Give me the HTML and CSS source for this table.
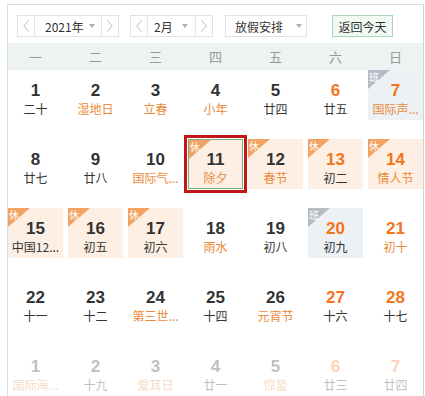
FILE: index.html
```html
<!DOCTYPE html>
<html lang="zh-CN">
<head>
<meta charset="utf-8">
<title>万年历</title>
<link rel="stylesheet" href="styles.css">
</head>
<body>
<div class="cal">
  <div class="toolbar">
    <div class="picker year">
      <span class="arrow prev"><svg width="6" height="12" viewBox="0 0 6 12"><path d="M5.5 0.5 L0.7 6 L5.5 11.5" fill="none" stroke="#b8b8b8"/></svg></span>
      <span class="value">2021年<i class="caret"></i></span>
      <span class="arrow next"><svg width="6" height="12" viewBox="0 0 6 12"><path d="M0.5 0.5 L5.3 6 L0.5 11.5" fill="none" stroke="#b8b8b8"/></svg></span>
    </div>
    <div class="picker month">
      <span class="arrow prev"><svg width="6" height="12" viewBox="0 0 6 12"><path d="M5.5 0.5 L0.7 6 L5.5 11.5" fill="none" stroke="#b8b8b8"/></svg></span>
      <span class="value">2月<i class="caret"></i></span>
      <span class="arrow next"><svg width="6" height="12" viewBox="0 0 6 12"><path d="M0.5 0.5 L5.3 6 L0.5 11.5" fill="none" stroke="#b8b8b8"/></svg></span>
    </div>
    <div class="picker holiday">
      <span class="value">放假安排<i class="caret"></i></span>
    </div>
    <div class="today">返回今天</div>
  </div>
  <div class="weekdays">
    <span>一</span><span>二</span><span>三</span><span>四</span><span>五</span><span>六</span><span>日</span>
  </div>
  <div class="days">
    <div class="cell"><span class="num">1</span><span class="lunar">二十</span></div>
    <div class="cell"><span class="num">2</span><span class="lunar fest">湿地日</span></div>
    <div class="cell"><span class="num">3</span><span class="lunar fest">立春</span></div>
    <div class="cell"><span class="num">4</span><span class="lunar fest">小年</span></div>
    <div class="cell"><span class="num">5</span><span class="lunar">廿四</span></div>
    <div class="cell weekend"><span class="num">6</span><span class="lunar">廿五</span></div>
    <div class="cell weekend work"><span class="tag">班</span><span class="num">7</span><span class="lunar fest">国际声...</span></div>

    <div class="cell"><span class="num">8</span><span class="lunar">廿七</span></div>
    <div class="cell"><span class="num">9</span><span class="lunar">廿八</span></div>
    <div class="cell"><span class="num">10</span><span class="lunar fest">国际气...</span></div>
    <div class="cell rest selected"><span class="tag">休</span><span class="num">11</span><span class="lunar fest">除夕</span></div>
    <div class="cell rest"><span class="tag">休</span><span class="num">12</span><span class="lunar fest">春节</span></div>
    <div class="cell rest weekend"><span class="tag">休</span><span class="num">13</span><span class="lunar">初二</span></div>
    <div class="cell rest weekend"><span class="tag">休</span><span class="num">14</span><span class="lunar fest">情人节</span></div>

    <div class="cell rest"><span class="tag">休</span><span class="num">15</span><span class="lunar">中国12...</span></div>
    <div class="cell rest"><span class="tag">休</span><span class="num">16</span><span class="lunar">初五</span></div>
    <div class="cell rest"><span class="tag">休</span><span class="num">17</span><span class="lunar">初六</span></div>
    <div class="cell"><span class="num">18</span><span class="lunar fest">雨水</span></div>
    <div class="cell"><span class="num">19</span><span class="lunar">初八</span></div>
    <div class="cell weekend work"><span class="tag">班</span><span class="num">20</span><span class="lunar">初九</span></div>
    <div class="cell weekend"><span class="num">21</span><span class="lunar fest">初十</span></div>

    <div class="cell"><span class="num">22</span><span class="lunar">十一</span></div>
    <div class="cell"><span class="num">23</span><span class="lunar">十二</span></div>
    <div class="cell"><span class="num">24</span><span class="lunar fest">第三世...</span></div>
    <div class="cell"><span class="num">25</span><span class="lunar">十四</span></div>
    <div class="cell"><span class="num">26</span><span class="lunar fest">元宵节</span></div>
    <div class="cell weekend"><span class="num">27</span><span class="lunar">十六</span></div>
    <div class="cell weekend"><span class="num">28</span><span class="lunar">十七</span></div>

    <div class="cell other"><span class="num">1</span><span class="lunar fest">国际海...</span></div>
    <div class="cell other"><span class="num">2</span><span class="lunar">十九</span></div>
    <div class="cell other"><span class="num">3</span><span class="lunar fest">爱耳日</span></div>
    <div class="cell other"><span class="num">4</span><span class="lunar">廿一</span></div>
    <div class="cell other"><span class="num">5</span><span class="lunar fest">惊蛰</span></div>
    <div class="cell other weekend"><span class="num">6</span><span class="lunar">廿三</span></div>
    <div class="cell other weekend"><span class="num">7</span><span class="lunar">廿四</span></div>
  </div>
</div>
</body>
</html>
```

FILE: styles.css
```css
html, body {
  margin: 0;
  padding: 0;
  overflow: hidden;
  background: #fff;
}

body {
  font-family: "Noto Sans CJK SC", "Microsoft YaHei", sans-serif;
  color: #333;
}

.cal {
  margin: 4px 0 0 7px;
  width: 417px;
  box-sizing: border-box;
  border: 1px solid #dadede;
  border-right-color: #bcdfcd;
  border-bottom: none;
}

/* ---------- toolbar ---------- */
.toolbar {
  display: flex;
  align-items: center;
  height: 38px;
  box-sizing: border-box;
  padding: 10px 0 6px 9px;
}

.picker {
  display: flex;
  height: 22px;
  box-sizing: border-box;
  border: 1px solid #e2e2e2;
}

.year { width: 102px; }
.month { width: 83px; margin-left: 11px; }
.holiday { width: 82px; margin-left: 12px; }

.arrow {
  width: 16px;
  display: flex;
  align-items: center;
  justify-content: center;
}
.prev { border-right: 1px solid #e6e6e6; }
.next { border-left: 1px solid #e6e6e6; }

.value {
  flex: 1;
  display: flex;
  align-items: center;
  font-size: 12px;
  color: #333;
  white-space: nowrap;
}
.year .value { padding-left: 10px; }
.month .value { padding-left: 6px; }
.holiday .value { padding-left: 9px; }

.caret {
  margin-left: auto;
  width: 0;
  height: 0;
  border-left: 3.5px solid transparent;
  border-right: 3.5px solid transparent;
  border-top: 4px solid #aeaeae;
}
.year .caret { margin-right: 6px; }
.month .caret { margin-right: 7px; }
.holiday .caret { margin-right: 4px; }

.today {
  margin-left: 25px;
  width: 61px;
  height: 22px;
  box-sizing: border-box;
  border: 1px solid #a9d6b4;
  background: #f1f9f3;
  font-size: 12px;
  color: #333;
  display: flex;
  align-items: center;
  justify-content: center;
}

/* ---------- weekday bar ---------- */
.weekdays {
  display: grid;
  grid-template-columns: repeat(7, 55px);
  column-gap: 5px;
  height: 27px;
  align-items: center;
  background: #edf2f2;
}
.weekdays span {
  text-align: center;
  font-size: 13px;
  color: #999;
}

/* ---------- days ---------- */
.days {
  display: grid;
  grid-template-columns: repeat(7, 55px);
  grid-auto-rows: 50px;
  column-gap: 5px;
  row-gap: 19px;
}

.cell {
  position: relative;
  z-index: 0;
  display: flex;
  flex-direction: column;
  align-items: center;
  padding-top: 10px;
  box-sizing: border-box;
}

.num {
  font-family: "Liberation Sans", Arial, sans-serif;
  font-weight: bold;
  font-size: 17px;
  line-height: 22px;
  color: #333;
}

.lunar {
  font-size: 12px;
  line-height: 16px;
  margin-top: -1px;
  white-space: nowrap;
  color: #333;
}
.lunar.fest { color: #e98b3a; }

.weekend .num { color: #f2751b; }

.rest { background: #fdefe3; }
.work { background: #eef1f4; }

.tag {
  position: absolute;
  left: 0;
  top: 0;
  width: 22px;
  height: 19px;
  font-size: 10px;
  line-height: 11px;
  color: #fff;
  padding: 1px 0 0 1px;
  box-sizing: border-box;
}
.tag::before {
  content: "";
  position: absolute;
  left: 0;
  top: 0;
  width: 100%;
  height: 100%;
  clip-path: polygon(0 0, 100% 0, 0 100%);
  background: #f2a363;
  z-index: -1;
}
.work .tag::before { background: #b5bcc5; }

.selected {
  border: 1px solid #72b07d;
  padding-top: 9px;
  outline: 3px solid #c0171b;
  outline-offset: 1px;
}

.other { opacity: 0.3; }
```
